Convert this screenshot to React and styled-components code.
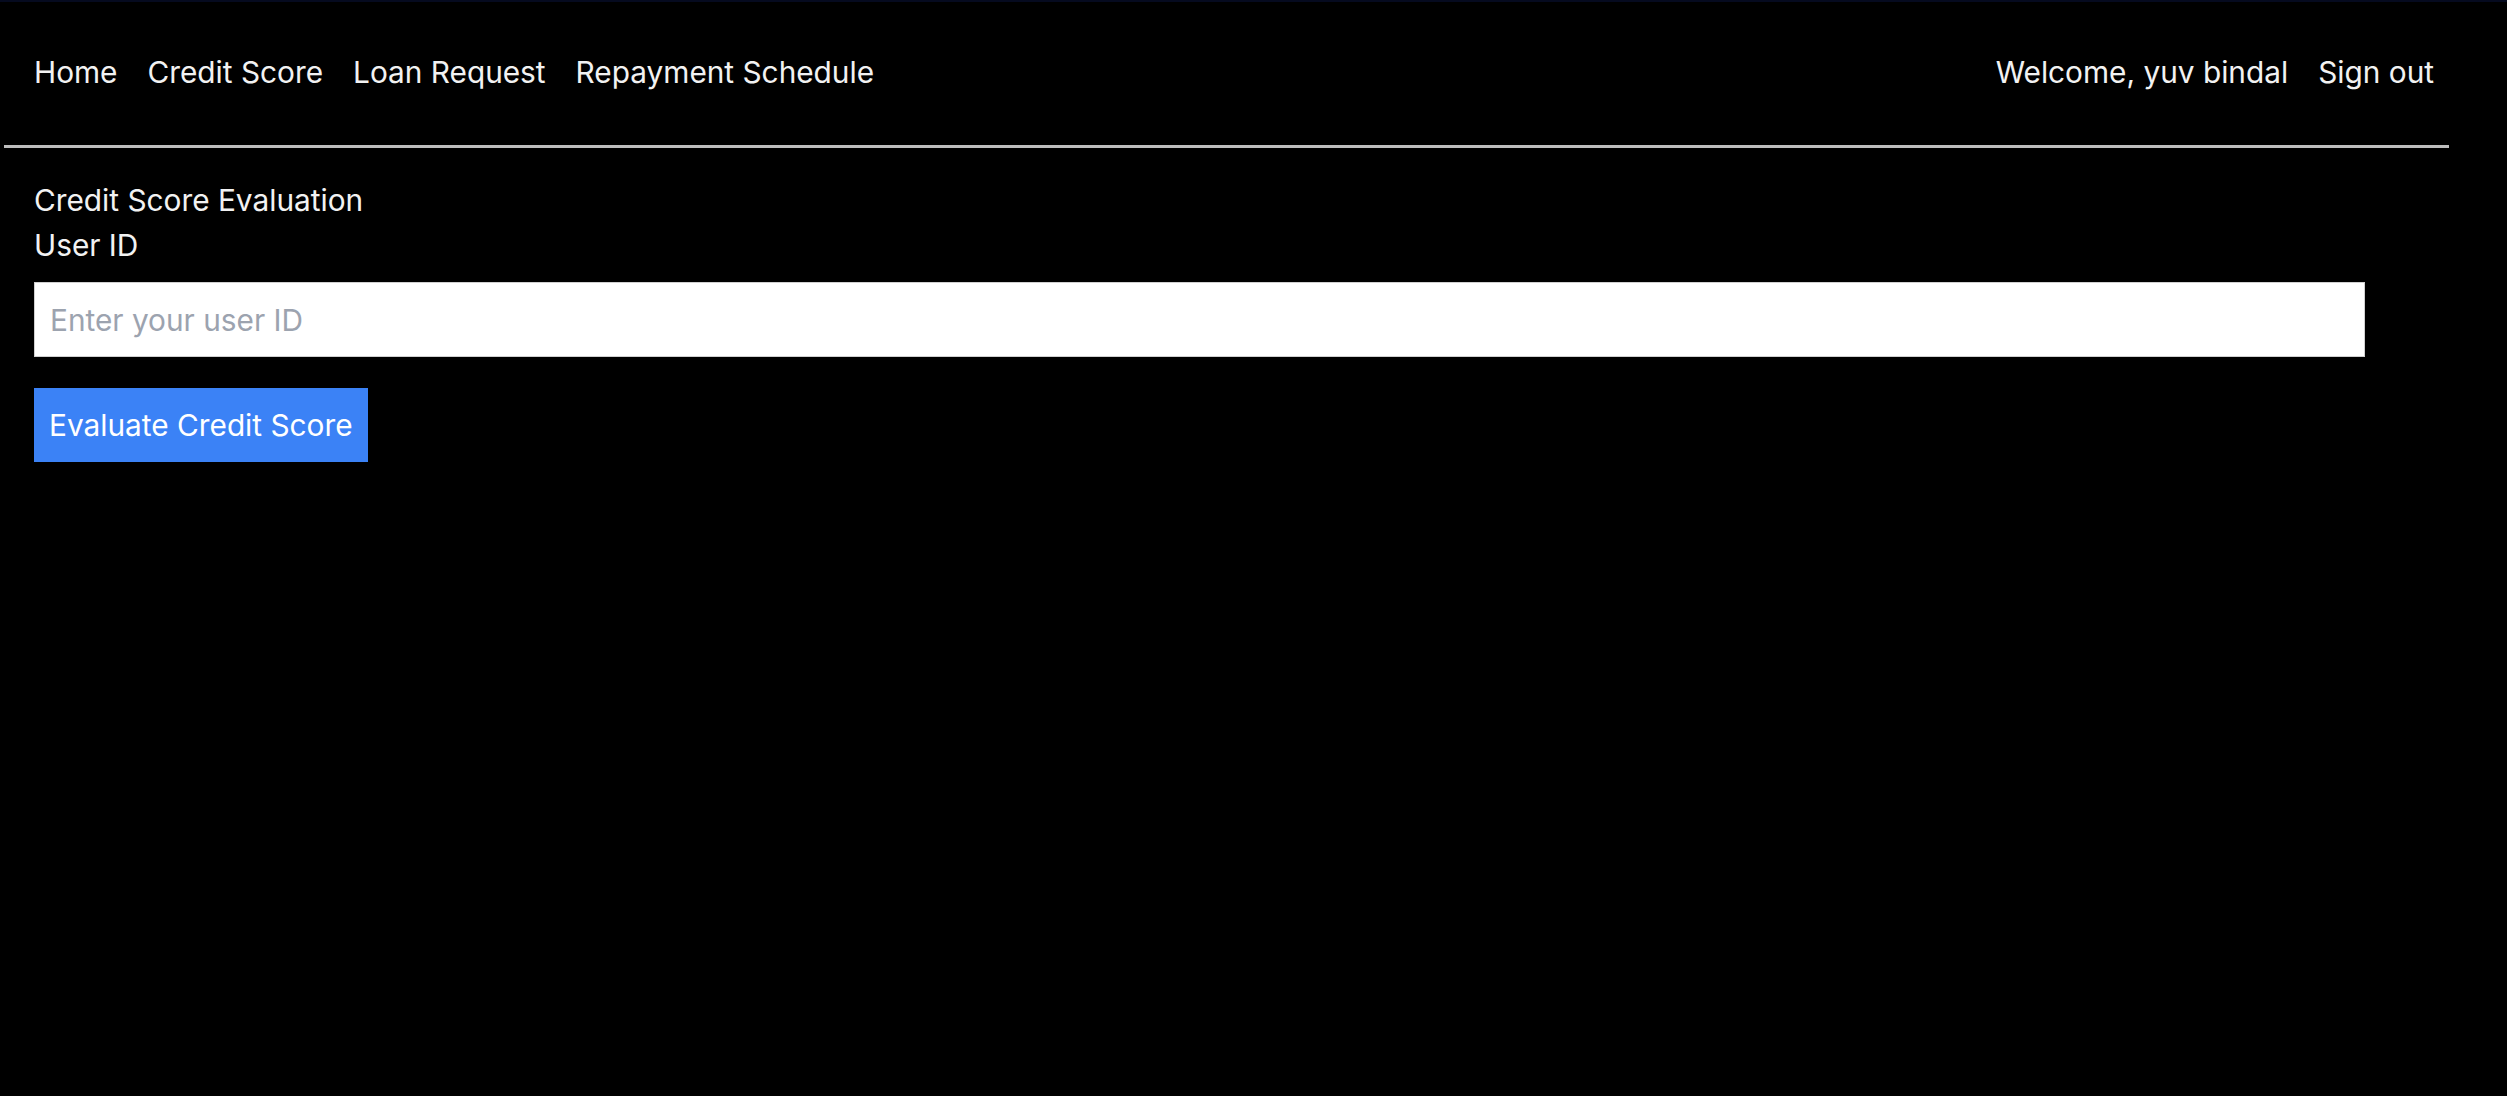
import React from 'react'
import styled, { createGlobalStyle } from 'styled-components'

const GlobalStyle = createGlobalStyle`
  html, body {
    margin: 0;
    padding: 0;
    background: #000;
  }
  body {
    font-family: Inter, "Noto Sans", sans-serif;
    color: #f2f2f2;
    min-height: 1096px;
    border-top: 2px solid #050a1f;
    box-sizing: border-box;
  }
`

const Page = styled.div`
  width: 2445px;
  padding-left: 4px;
`

const Nav = styled.nav`
  height: 140px;
  display: flex;
  align-items: center;
  justify-content: space-between;
  padding: 0 15px 3px 30px;
  border-bottom: 3px solid #bdbdbd;
  font-size: 29.8px;
  line-height: 45px;
`

const NavGroup = styled.div`
  display: flex;
  align-items: center;
  gap: 30px;
`

const NavLink = styled.a`
  color: #f2f2f2;
  text-decoration: none;
  cursor: pointer;
`

const Main = styled.main`
  padding: 30px 84px 0 30px;
  font-size: 29.8px;
  line-height: 45px;
`

const Title = styled.h2`
  margin: 0;
  font-size: 29.8px;
  font-weight: 400;
  line-height: 45px;
`

const Label = styled.label`
  display: block;
`

const Input = styled.input`
  display: block;
  width: 100%;
  box-sizing: border-box;
  margin-top: 14px;
  height: 75px;
  padding: 15px;
  font-family: Inter, "Noto Sans", sans-serif;
  font-size: 29.8px;
  color: #111;
  background: #fff;
  border: 1px solid #d0d0d0;
  outline: none;

  &::placeholder {
    color: #9ca3af;
  }
`

const Button = styled.button`
  margin-top: 31px;
  height: 74px;
  padding: 0 15px;
  font-family: Inter, "Noto Sans", sans-serif;
  font-size: 29.8px;
  color: #fff;
  background: #3b82f6;
  border: none;
  cursor: pointer;
`

export default function App() {
  return (
    <>
      <GlobalStyle />
      <Page>
        <Nav>
          <NavGroup>
            <NavLink>Home</NavLink>
            <NavLink>Credit Score</NavLink>
            <NavLink>Loan Request</NavLink>
            <NavLink>Repayment Schedule</NavLink>
          </NavGroup>
          <NavGroup>
            <span>Welcome, yuv bindal</span>
            <NavLink>Sign out</NavLink>
          </NavGroup>
        </Nav>
        <Main>
          <Title>Credit Score Evaluation</Title>
          <Label htmlFor="userId">User ID</Label>
          <Input id="userId" type="text" placeholder="Enter your user ID" />
          <Button>Evaluate Credit Score</Button>
        </Main>
      </Page>
    </>
  )
}
